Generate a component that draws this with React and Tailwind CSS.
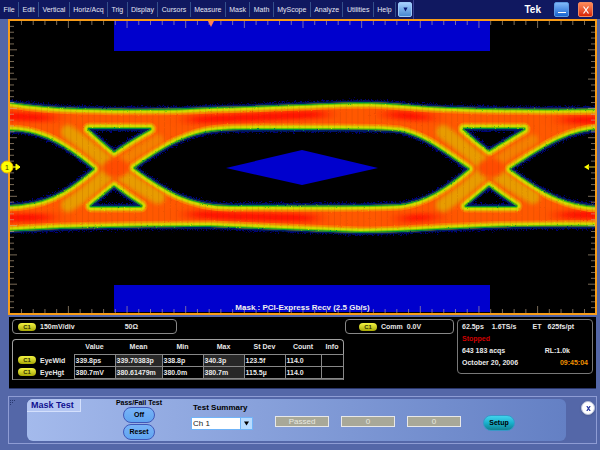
import { useState } from "react";

const menuItems = [
  "File",
  "Edit",
  "Vertical",
  "Horiz/Acq",
  "Trig",
  "Display",
  "Cursors",
  "Measure",
  "Mask",
  "Math",
  "MyScope",
  "Analyze",
  "Utilities",
  "Help",
];

const measurements = [
  {
    name: "EyeWid",
    values: ["339.8ps", "339.70383p", "338.8p", "340.3p", "123.5f", "114.0", ""],
  },
  {
    name: "EyeHgt",
    values: ["380.7mV", "380.61479m", "380.0m", "380.7m", "115.5µ", "114.0", ""],
  },
];

const columns = [
  { label: "Value", className: "w-[41px]" },
  { label: "Mean", className: "w-[47px]", shaded: true },
  { label: "Min", className: "w-[41px]" },
  { label: "Max", className: "w-[41px]", shaded: true },
  { label: "St Dev", className: "w-[41px]" },
  { label: "Count", className: "w-[36px]" },
  { label: "Info", className: "w-[22px]" },
];

// outer envelope of the trace plus the eye openings (even-odd)
const eyePath = [
  "M-20 101 L10 102 C30 105 50 107 80 108 C120 109 180 109 210 107 C260 106 320 103 360 102 C400 102 420 107 455 107 C500 109 560 109 625 108",
  "L625 227 C540 226 500 227 460 229 C430 230 400 233 360 233 C300 231 260 229 210 227 C150 227 100 228 60 229 C40 230 20 232 -20 232 Z",
  "M-20 131 L4 131 C35 130 58 140 93 169 C66 192 45 205 4 205 L-20 205 Z",
  "M135 168 C150 158 175 139 205 133 C225 129 250 130 300 130 C350 130 375 129 400 132 C425 137 445 154 468 169 C445 188 425 201 400 204 C370 206 260 205 230 205 C190 205 165 190 135 168 Z",
  "M625 130 L602 130 C565 131 540 151 511 169 C540 190 565 206 602 206 L625 206 Z",
  "M89 129 L150 129 Q130 140 114 151 Q101 140 89 129 Z",
  "M91 206 Q103 196 114 187 Q127 197 141 206 Z",
  "M464 129 L524 129 Q505 140 489 150 Q476 140 464 129 Z",
  "M466 206 Q478 196 489 187 Q502 197 516 206 Z",
].join(" ");

const Graticule = () => {
  const ticks = [];
  for (let i = -24; i <= 24; i++) {
    const x = 303 + i * 11.73;
    const len = i % 5 === 0 ? 7 : 4;
    ticks.push(`M${x} 21v${len}M${x} 313v${-len}`);
  }
  for (let i = -24; i <= 24; i++) {
    const y = 167 + i * 5.86;
    const len = i % 5 === 0 ? 7 : 4;
    ticks.push(`M10 ${y}h${len}M595 ${y}h${-len}`);
  }
  return (
    <path d={ticks.join("")} stroke="#c8b090" strokeWidth="1" opacity="0.6" />
  );
};

const EyeDiagram = () => (
  <svg
    viewBox="10 21 585 292"
    className="block w-full overflow-visible"
    role="img"
    aria-label="Eye diagram"
  >
    <defs>
      <clipPath id="screen">
        <rect x="10" y="21" width="585" height="292" />
      </clipPath>
      <clipPath id="eye">
        <path d={eyePath} clipRule="evenodd" />
      </clipPath>
      <filter id="grain" filterUnits="userSpaceOnUse" x="0" y="80" width="605" height="180">
        <feTurbulence type="fractalNoise" baseFrequency="0.7" numOctaves="2" seed="4" />
        <feDisplacementMap in="SourceGraphic" scale="2" xChannelSelector="R" yChannelSelector="G" />
      </filter>
      <filter id="speckle" filterUnits="userSpaceOnUse" x="0" y="80" width="605" height="180">
        <feTurbulence type="fractalNoise" baseFrequency="0.8" numOctaves="2" seed="9" />
        <feDisplacementMap in="SourceGraphic" scale="9" xChannelSelector="R" yChannelSelector="G" />
      </filter>
      <filter id="soft" filterUnits="userSpaceOnUse" x="0" y="80" width="605" height="180" colorInterpolationFilters="sRGB">
        <feGaussianBlur stdDeviation="0.7" />
      </filter>
      <filter id="glow" filterUnits="userSpaceOnUse" x="-20" y="80" width="645" height="180" colorInterpolationFilters="sRGB">
        <feGaussianBlur stdDeviation="2" />
      </filter>
      <filter id="streak" filterUnits="userSpaceOnUse" x="-20" y="80" width="645" height="180" colorInterpolationFilters="sRGB">
        <feGaussianBlur stdDeviation="10 2" />
      </filter>
      <pattern id="columns" width="5.86" height="10" patternUnits="userSpaceOnUse">
        <rect width="1" height="10" fill="#802000" opacity="0.12" />
      </pattern>
    </defs>

    <rect x="10" y="21" width="585" height="292" fill="#000" />
    <rect x="114" y="21" width="376" height="30" fill="#0000cd" />
    <rect x="114" y="285" width="376" height="27" fill="#0000cd" />
    <path d="M226 168L302 150L378 168L302 185Z" fill="#0000cd" />

    <g clipPath="url(#screen)" fill="none" strokeLinejoin="round">
      <path d={eyePath} stroke="#000078" strokeWidth="4" filter="url(#speckle)" />
      <g filter="url(#grain)">
        <path d={eyePath} stroke="#002060" strokeWidth="3" />
        <g clipPath="url(#eye)">
          <rect x="0" y="90" width="605" height="150" fill="#ff5800" />
          <g filter="url(#glow)" strokeLinecap="round">
            <path
              d="M68 132Q88 146 114 168Q132 183 158 197M68 205Q90 192 114 168M443 132Q463 146 489 168Q507 183 533 197M443 205Q464 192 489 168"
              stroke="#e89c00"
              strokeWidth="14"
            />
            <path
              d="M120 163Q138 150 158 140M495 163Q513 150 533 140"
              stroke="#f48000"
              strokeWidth="11"
            />
            <ellipse cx="116" cy="168" rx="13" ry="10" fill="#ff4c00" />
            <ellipse cx="491" cy="168" rx="13" ry="10" fill="#ff4c00" />
          </g>
          <path
            d="M-20 115Q30 117 52 118M-20 218Q30 218 50 217M190 120C230 118 270 117 325 114M190 214C230 217 270 217 315 218M388 114Q410 116 430 118M402 219Q420 218 434 216M565 120H640M560 215H640"
            stroke="#ff1000"
            strokeWidth="8"
            filter="url(#streak)"
          />
          <g filter="url(#soft)">
            <path d={eyePath} stroke="#f88400" strokeWidth="13" />
            <path d={eyePath} stroke="#e8ac00" strokeWidth="10" />
            <path d={eyePath} stroke="#d4d800" strokeWidth="8" />
            <path d={eyePath} stroke="#68c800" strokeWidth="4" />
            <path d={eyePath} stroke="#008840" strokeWidth="2" />
          </g>
          <rect x="0" y="90" width="605" height="150" fill="url(#columns)" />
        </g>
      </g>
    </g>

    <Graticule />

    {/* trigger position */}
    <path d="M208 21H214L211 27Z" fill="#ff8058" />
    {/* channel 1 reference */}
    <path d="M12 167H16V164L20 167L16 170V167" fill="#ffff00" stroke="#ffff00" />
    <circle cx="7" cy="167" r="6" fill="#ffff00" stroke="#f0b800" strokeWidth="1" />
    <text x="7" y="170" textAnchor="middle" fontSize="7" fill="#403000">
      1
    </text>
    {/* trigger level */}
    <path d="M584 167L589 164V170Z" fill="#ffff00" />
    <path d="M588 167H595" stroke="#a09000" />
  </svg>
);

const ChannelBadge = () => (
  <span className="inline-block h-2 w-[18px] shrink-0 rounded-full bg-gradient-to-b from-[#f4f440] to-[#a8a800] text-center text-[6px] leading-2 font-bold text-[#303000]">
    C1
  </span>
);

const MenuBar = () => (
  <header className="flex h-[19px] items-stretch bg-[#101860] text-[7px] text-[#e4e6f4]">
    <nav className="flex w-[66%] items-stretch py-0.5">
      {menuItems.map((item) => (
        <button
          key={item}
          className="flex-auto border-r border-[#34508c] px-[3px] pt-px whitespace-nowrap"
        >
          {item}
        </button>
      ))}
    </nav>
    <button
      aria-label="More menus"
      className="my-0.5 ml-0.5 flex w-[14px] items-center justify-center rounded-xs border border-[#9cc8f8] bg-gradient-to-b from-[#a4d0ff] to-[#4888d0]"
    >
      <svg viewBox="0 0 6 6" className="w-[5px]">
        <path d="M0.5 0.5H5.5L3 5.5Z" fill="#081878" />
      </svg>
    </button>
    <div className="ml-px flex flex-1 items-center justify-end gap-[9px] border-l border-[#384090] pr-[7px]">
      <span className="pr-1 text-[10px] font-bold text-white">Tek</span>
      <button
        aria-label="Minimize"
        className="flex h-[15px] w-[15px] items-end justify-center rounded-xs border border-[#5c98e0] bg-gradient-to-b from-[#80b8f8] to-[#1464d0] pb-[3px]"
      >
        <span className="h-px w-2 bg-white" />
      </button>
      <button
        aria-label="Close"
        className="flex h-[15px] w-[15px] items-center justify-center rounded-xs border border-[#f08860] bg-gradient-to-b from-[#ff8858] to-[#d82000]"
      >
        <svg viewBox="0 0 8 8" className="w-2">
          <path d="M1.5 0.5L6.5 7.5M6.5 0.5L1.5 7.5" stroke="#fff" strokeWidth="1.2" />
        </svg>
      </button>
    </div>
  </header>
);

const MeasurementTable = () => (
  <div className="w-[332px] rounded-t-sm border border-[#a0a0a0] border-b-[#686868]">
    <table className="w-full table-fixed border-collapse leading-[11px]">
      <thead>
        <tr className="h-[14px]">
          <th className="w-[61px]" aria-label="Measurement" />
          {columns.map((col) => (
            <th key={col.label} className={`${col.className} p-0 text-center font-bold`}>
              {col.label}
            </th>
          ))}
        </tr>
      </thead>
      <tbody>
        {measurements.map((row) => (
          <tr key={row.name} className="h-3">
            <th className="p-0 text-left font-bold">
              <span className="flex items-center gap-1 pl-[5px]">
                <ChannelBadge />
                {row.name}
              </span>
            </th>
            {row.values.map((value, i) => (
              <td
                key={columns[i].label}
                className={`border border-[#888888] py-0 pr-0 pl-px ${
                  columns[i].shaded ? "bg-[#282828]" : ""
                }`}
              >
                {value}
              </td>
            ))}
          </tr>
        ))}
      </tbody>
    </table>
  </div>
);

const Readouts = () => (
  <section className="mt-0.5 mr-px ml-px flex h-[72px] gap-[3px] border-b border-[#283468] bg-black px-[3px] py-0.5 text-[7px] font-bold text-[#e8e8e8]">
    <div className="flex flex-1 flex-col gap-[5px]">
      <div className="flex justify-between">
        <div className="flex h-[15px] w-[165px] items-center gap-1 rounded-sm border border-[#888888] pt-px pl-[5px]">
          <ChannelBadge />
          <span>150mV/div</span>
          <span className="ml-[46px]">50Ω</span>
        </div>
        <div className="flex h-[15px] w-[109px] items-center gap-1 rounded-sm border border-[#888888] pt-px pl-[13px]">
          <ChannelBadge />
          <span>Comm</span>
          <span>0.0V</span>
        </div>
      </div>
      <MeasurementTable />
    </div>
    <div className="h-[55px] w-[136px] rounded-sm border border-[#787878] px-1 pt-px leading-3">
      <div className="flex">
        <span>62.5ps</span>
        <span className="ml-2">1.6TS/s</span>
        <span className="ml-auto">ET</span>
        <span className="mr-[14px] ml-[6px]">625fs/pt</span>
      </div>
      <div className="text-[#d00000]">Stopped</div>
      <div className="flex justify-between pr-[18px]">
        <span>643 183 acqs</span>
        <span>RL:1.0k</span>
      </div>
      <div className="flex justify-between">
        <span>October 20, 2006</span>
        <span className="text-[#f09000]">09:45:04</span>
      </div>
    </div>
  </section>
);

const MaskTestPanel = () => {
  const [enabled, setEnabled] = useState(false);

  return (
    <section className="mt-[7px] flex h-12 border border-[#8e9cd4] py-0.5 pr-px">
      <div className="w-[18px] pt-px pl-px">
        <svg viewBox="0 0 6 6" className="w-[6px]">
          <path d="M0 0h1v1h-1zM2 0h1v1h-1zM4 0h1v1h-1zM0 2h1v1h-1zM2 2h1v1h-1zM0 4h1v1h-1z" fill="#283870" />
        </svg>
      </div>
      <div className="flex flex-1 items-start rounded-md bg-gradient-to-r from-[#a4baec] to-[#6480c4]">
        <h2 className="h-[13px] w-[54px] rounded-tl-md border-r border-b border-[#d4e0fc] bg-[#b4c6f2] pl-1 text-[9px] leading-[13px] font-bold whitespace-nowrap text-[#101090]">
          Mask Test
        </h2>
        <div className="ml-8 flex w-[52px] flex-col items-center text-[7px] font-bold text-black">
          <span className="leading-2 whitespace-nowrap">Pass/Fail Test</span>
          <button
            onClick={() => setEnabled(!enabled)}
            className="h-4 w-8 rounded-full border border-[#4058b8] bg-gradient-to-b from-[#78b4f8] to-[#60a4f0]"
          >
            {enabled ? "On" : "Off"}
          </button>
          <button className="mt-px h-4 w-8 rounded-full border border-[#4058b8] bg-gradient-to-b from-[#78b4f8] to-[#60a4f0]">
            Reset
          </button>
        </div>
        <div className="ml-[26px] w-[62px] pt-1">
          <label htmlFor="summary" className="block pl-0.5 text-[8px] leading-[10px] font-bold whitespace-nowrap text-black">
            Test Summary
          </label>
          <div className="relative mt-1">
            <select
              id="summary"
              className="block h-[13px] w-full appearance-none border border-[#70b4f8] bg-white p-0 pl-px text-[8px] leading-[11px] text-[#202020]"
            >
              <option>Ch 1</option>
              <option>Ch 2</option>
            </select>
            <span className="pointer-events-none absolute inset-y-0 right-0 flex w-[13px] items-center justify-center border border-[#70b4f8] bg-[#b8dcff]">
              <svg viewBox="0 0 6 6" className="w-[5px]">
                <path d="M0 0.5H6L3 5.5Z" fill="#000" />
              </svg>
            </span>
          </div>
        </div>
        <div className="ml-[22px] flex gap-3 pt-[17px]">
          {["Passed", "0", "0"].map((value, i) => (
            <input
              key={i}
              readOnly
              aria-label={`Result ${i + 1}`}
              value={value}
              className="h-[11px] w-[54px] border border-[#e8e8e8] bg-[#a8a898] p-0 text-center text-[8px] leading-[9px] text-[#e8e8e0]"
            />
          ))}
        </div>
        <button className="mt-4 ml-[22px] h-4 w-8 rounded-full border border-[#3898c8] bg-gradient-to-b from-[#40d4ec] via-[#18b0cc] to-[#108090] text-[7px] font-bold text-black">
          Setup
        </button>
      </div>
      <div className="flex w-[29px] justify-end pt-[2px]">
        <button
          aria-label="Close panel"
          className="flex h-[14px] w-[14px] items-center justify-center rounded-full border border-[#b8c0d8] bg-white shadow"
        >
          <svg viewBox="0 0 6 6" className="w-[5px]">
            <path d="M1 0L5 6M5 0L1 6" stroke="#2838a0" strokeWidth="1.5" />
          </svg>
        </button>
      </div>
    </section>
  );
};

const App = () => {
  return (
    <div className="min-h-screen bg-[#5467a8] font-['Liberation_Sans',Arial,sans-serif]">
      <MenuBar />
      <main className="pr-[3px] pl-2">
        <div className="relative border-2 border-[#f89c18]">
          <EyeDiagram />
          <p className="absolute inset-x-0 bottom-0 text-center text-[8px] leading-[10px] font-bold text-[#f0f0f0]">
            Mask : PCI-Express Recv (2.5 Gb/s)
          </p>
        </div>
        <Readouts />
        <MaskTestPanel />
      </main>
    </div>
  );
};

export default App;
